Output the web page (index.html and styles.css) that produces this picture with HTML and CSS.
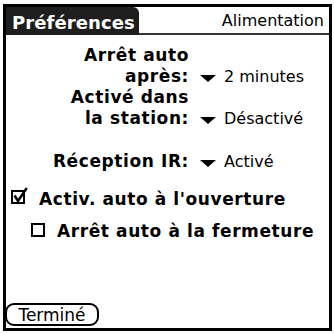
FILE: index.html
```html
<!DOCTYPE html>
<html lang="fr">
<head>
<meta charset="utf-8">
<title>Préférences</title>
<link rel="stylesheet" href="styles.css">
</head>
<body>
<div class="frame">
  <div class="titlebar">
    <div class="tab">Préférences</div>
    <div class="titlerest">Alimentation</div>
  </div>
  <div class="form">
    <div class="group">
      <div class="line"><span class="label">Arrêt auto</span></div>
      <div class="line"><span class="label">après:</span><span class="trigger"><span class="tri"></span>2 minutes</span></div>
    </div>
    <div class="group">
      <div class="line"><span class="label">Activé dans</span></div>
      <div class="line"><span class="label">la station:</span><span class="trigger"><span class="tri"></span>Désactivé</span></div>
    </div>
    <div class="group group-ir">
      <div class="line"><span class="label">Réception IR:</span><span class="trigger"><span class="tri"></span>Activé</span></div>
    </div>
    <div class="line check check-1">
      <svg class="box box-checked" width="17" height="18" viewBox="0 0 17 18"><rect x="1" y="4" width="12" height="12" fill="none" stroke="#000" stroke-width="2"/><path d="M3.5 8.5 L7 14 L15.8 1" fill="none" stroke="#000" stroke-width="2.5"/></svg>
      <span class="checklabel">Activ. auto à l'ouverture</span>
    </div>
    <div class="line check check-2">
      <svg class="box box-empty" width="14" height="14" viewBox="0 0 14 14"><rect x="1" y="1" width="12" height="12" fill="none" stroke="#000" stroke-width="2"/></svg>
      <span class="checklabel">Arrêt auto à la fermeture</span>
    </div>
  </div>
  <div class="footer">
    <button class="btn">Terminé</button>
  </div>
</div>
</body>
</html>
```
FILE: styles.css
```css
html, body {
  margin: 0;
  padding: 0;
  background: #fff;
}
body {
  font-family: "DejaVu Sans", "Liberation Sans", sans-serif;
  color: #000;
  width: 334px;
  height: 334px;
  overflow: hidden;
}
.frame {
  margin: 4px 0 0 3px;
  width: 329px;
  height: 327px;
  box-sizing: border-box;
  border: 3px solid #000;
  display: flex;
  flex-direction: column;
}
.titlebar {
  display: flex;
  height: 28px;
  flex: none;
}
.tab {
  width: 133px;
  box-sizing: border-box;
  background: #1e1e1e;
  color: #fff;
  font-weight: bold;
  font-size: 18px;
  letter-spacing: 0.1px;
  line-height: 22px;
  padding: 5px 0 0 6px;
  border-top-right-radius: 6px;
  white-space: nowrap;
}
.titlerest {
  flex: 1;
  border-bottom: 2px solid #333;
  text-align: right;
  padding: 3px 5px 0 0;
  font-size: 16px;
  line-height: 22px;
  white-space: nowrap;
}
.form {
  padding-top: 10px;
  display: flex;
  flex-direction: column;
}
.line {
  display: flex;
  align-items: baseline;
  font-size: 16px;
  line-height: 21px;
  white-space: nowrap;
}
.label {
  width: 183px;
  text-align: right;
  font-weight: bold;
  font-size: 17px;
  letter-spacing: 0.6px;
  flex: none;
}
.trigger {
  margin-left: 11px;
  display: inline-flex;
  align-items: baseline;
}
.tri {
  display: inline-block;
  width: 0;
  height: 0;
  border-left: 8px solid transparent;
  border-right: 8px solid transparent;
  border-top: 7px solid #000;
  margin: 0 8px 4px 0;
}
.group-ir {
  margin-top: 22px;
}
.check-1 {
  margin-top: 15px;
}
.check-2 {
  margin-top: 11px;
}
.box {
  flex: none;
}
.box-checked {
  margin: 0 11px 0 5px;
}
.box-empty {
  margin: 0 12px -1px 25px;
}
.checklabel {
  font-weight: bold;
  font-size: 17px;
  letter-spacing: 0.6px;
}
.footer {
  margin-top: auto;
  padding-bottom: 2px;
}
.btn {
  display: block;
  margin-left: -1px;
  width: 94px;
  height: 23px;
  box-sizing: border-box;
  border: 2px solid #000;
  border-radius: 9px;
  background: #fff;
  color: #000;
  font-family: "DejaVu Sans", "Liberation Sans", sans-serif;
  font-size: 17px;
  line-height: 18px;
  padding: 0;
  text-align: center;
}
```
